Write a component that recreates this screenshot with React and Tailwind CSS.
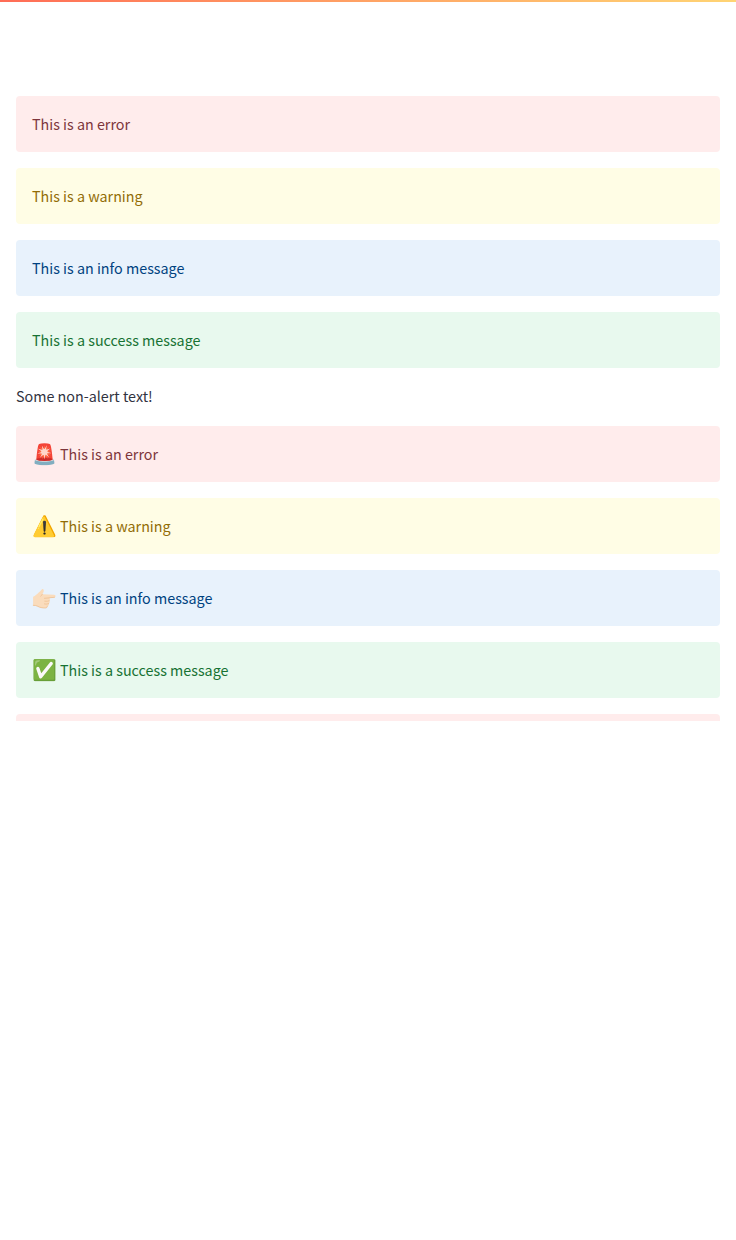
const styles = {
  error: "bg-[#ffecec] text-[#7d353b]",
  warning: "bg-[#fffde5] text-[#926c05]",
  info: "bg-[#e8f2fc] text-[#004280]",
  success: "bg-[#e8f9ee] text-[#177233]",
};
function PointingHand() {
  return (
    <svg viewBox="0 0 24 24" className="block size-6" role="img" aria-label="👉🏻">
      <path
        fill="#fadcbc"
        d="M1.1 10.8c2.3-.9 4-2.6 5.6-4.2C8 5.300 9 4.300 9.800 3.400c.6-.6 1.700-.3 1.900.6.3 1.400-.5 2.900-1.400 4.300l12 .5c1.700.1 1.700 2.500 0 2.600l-5.300.4c1.200.6 1.300 2.200.3 2.900.8.9.6 2.300-.5 2.800.5 1-.1 2.300-1.200 2.600.1 1.200-.8 2-2.100 2-3.100.1-5.800-.5-7.800-1.700-1.400-.8-2.800-.9-4.600-.9z"
      />
      <g fill="none" stroke="#edbf91" strokeWidth=".8" strokeLinecap="round">
        <path d="M12.500 12.300l4.300-.4M12.800 15.200c1.800.2 3.200.1 4.500-.4M12.500 17.900c1.700.3 3 .2 4.200-.3" />
        <path d="M1.300 19.300c1.700 0 3.100.2 4.500 1 2 1.200 4.600 1.700 7.500 1.700 1.200 0 2-.7 2-1.800" />
        <path d="M10.300 8.300c-.5.800-1 1.400-1.500 1.900M22.500 11.300l-5.200.5" />
      </g>
    </svg>
  );
}
function Alert({ kind, icon, children }) {
  return (
    <div className={`flex h-14 shrink-0 items-center gap-1 rounded px-4 ${styles[kind]}`}>
      {typeof icon === "string" ? (
        <span className="w-6 shrink-0 pb-0.5 text-[20px] leading-6">{icon}</span>
      ) : (
        icon
      )}
      <span className="pb-px leading-[25px]">{children}</span>
    </div>
  );
}
export default function App() {
  return (
    <main className="h-[1240px] bg-white text-[14.32px] text-[#31333f] [font-family:'Source_Sans_Pro','Noto_Sans_CJK_SC',sans-serif]">
      <div className="h-0.5 bg-linear-to-r from-[#ff6c56] to-[#ffd474]" />
      <div className="flex h-[719px] flex-col gap-4 overflow-hidden px-4 pt-[94px]">
        <Alert kind="error">This is an error</Alert>
        <Alert kind="warning">This is a warning</Alert>
        <Alert kind="info">This is an info message</Alert>
        <Alert kind="success">This is a success message</Alert>
        <p className="h-[26px] shrink-0 leading-[24px]">Some non-alert text!</p>
        <Alert kind="error" icon="🚨">This is an error</Alert>
        <Alert kind="warning" icon="⚠️">This is a warning</Alert>
        <Alert kind="info" icon={<PointingHand />}>This is an info message</Alert>
        <Alert kind="success" icon="✅">This is a success message</Alert>
        <Alert kind="error" />
      </div>
    </main>
  );
}
